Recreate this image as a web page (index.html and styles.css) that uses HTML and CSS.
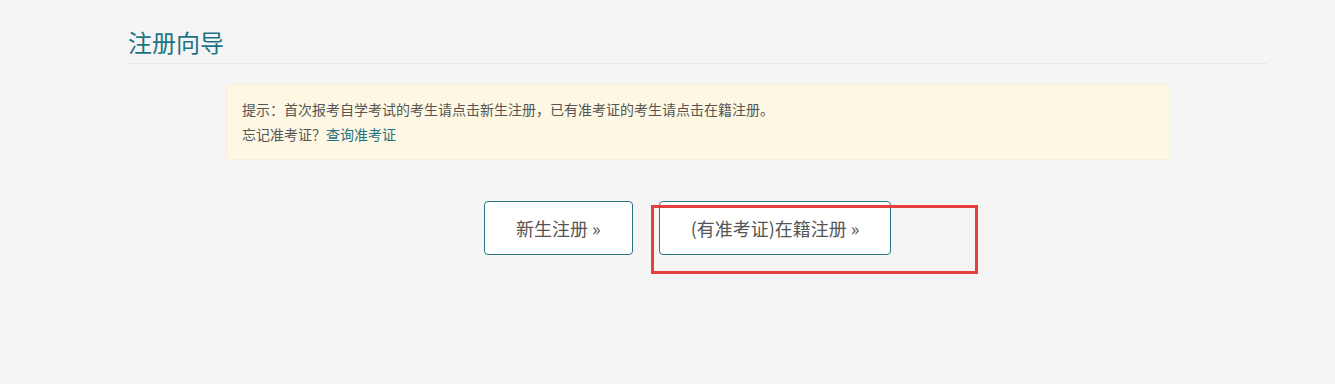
FILE: index.html
```html
<!DOCTYPE html>
<html lang="zh-CN">
<head>
    <meta charset="UTF-8">
    <meta name="viewport" content="width=device-width, initial-scale=1.0">
    <title>注册向导</title>
    <link rel="stylesheet" href="styles.css">
</head>
<body>
    <div class="container">
        <h1 class="page-title">注册向导</h1>

        <div class="alert-tip">
            <p>提示：首次报考自学考试的考生请点击新生注册，已有准考证的考生请点击在籍注册。</p>
            <p>忘记准考证？<a href="#" class="tip-link">查询准考证</a></p>
        </div>

        <div class="btn-row">
            <a href="#" class="reg-button">新生注册 &raquo;</a>
            <a href="#" class="reg-button">(有准考证)在籍注册 &raquo;</a>
        </div>
    </div>

    <!-- 标注框 -->
    <div class="mark-box"></div>
</body>
</html>
```

FILE: styles.css
```css
body {
    margin: 0;
    background-color: #f5f5f5;
    font-family: "Noto Sans CJK SC", "Liberation Sans", sans-serif;
    color: #555;
}
.container {
    width: 1139px;
    margin-left: 128px;
}
.page-title {
    margin: 27px 0 0;
    padding-bottom: 7px;
    font-size: 24px;
    line-height: 29px;
    font-weight: normal;
    color: #1b7384;
    border-bottom: 1px solid #e8e8e8;
}
.alert-tip {
    margin: 20px 97px 0 98px;
    padding: 12px 15px;
    background: #fdf7e3;
    border: 1px solid #f8efd6;
    border-radius: 4px;
    font-size: 14px;
    line-height: 25px;
    color: #555;
}
.alert-tip p {
    margin: 0;
}
.tip-link {
    color: #1b7384;
    text-decoration: none;
}
.btn-row {
    display: flex;
    gap: 26px;
    margin: 41px 0 0 356px;
}
.reg-button {
    display: inline-flex;
    align-items: center;
    height: 54px;
    box-sizing: border-box;
    padding: 0 31px;
    background: #fff;
    border: 1px solid #2a7585;
    border-radius: 4px;
    font-size: 18px;
    color: #555;
    text-decoration: none;
}
.mark-box {
    position: absolute;
    left: 651px;
    top: 205px;
    width: 327px;
    height: 69px;
    box-sizing: border-box;
    border: 3px solid #e53e3e;
}
```
